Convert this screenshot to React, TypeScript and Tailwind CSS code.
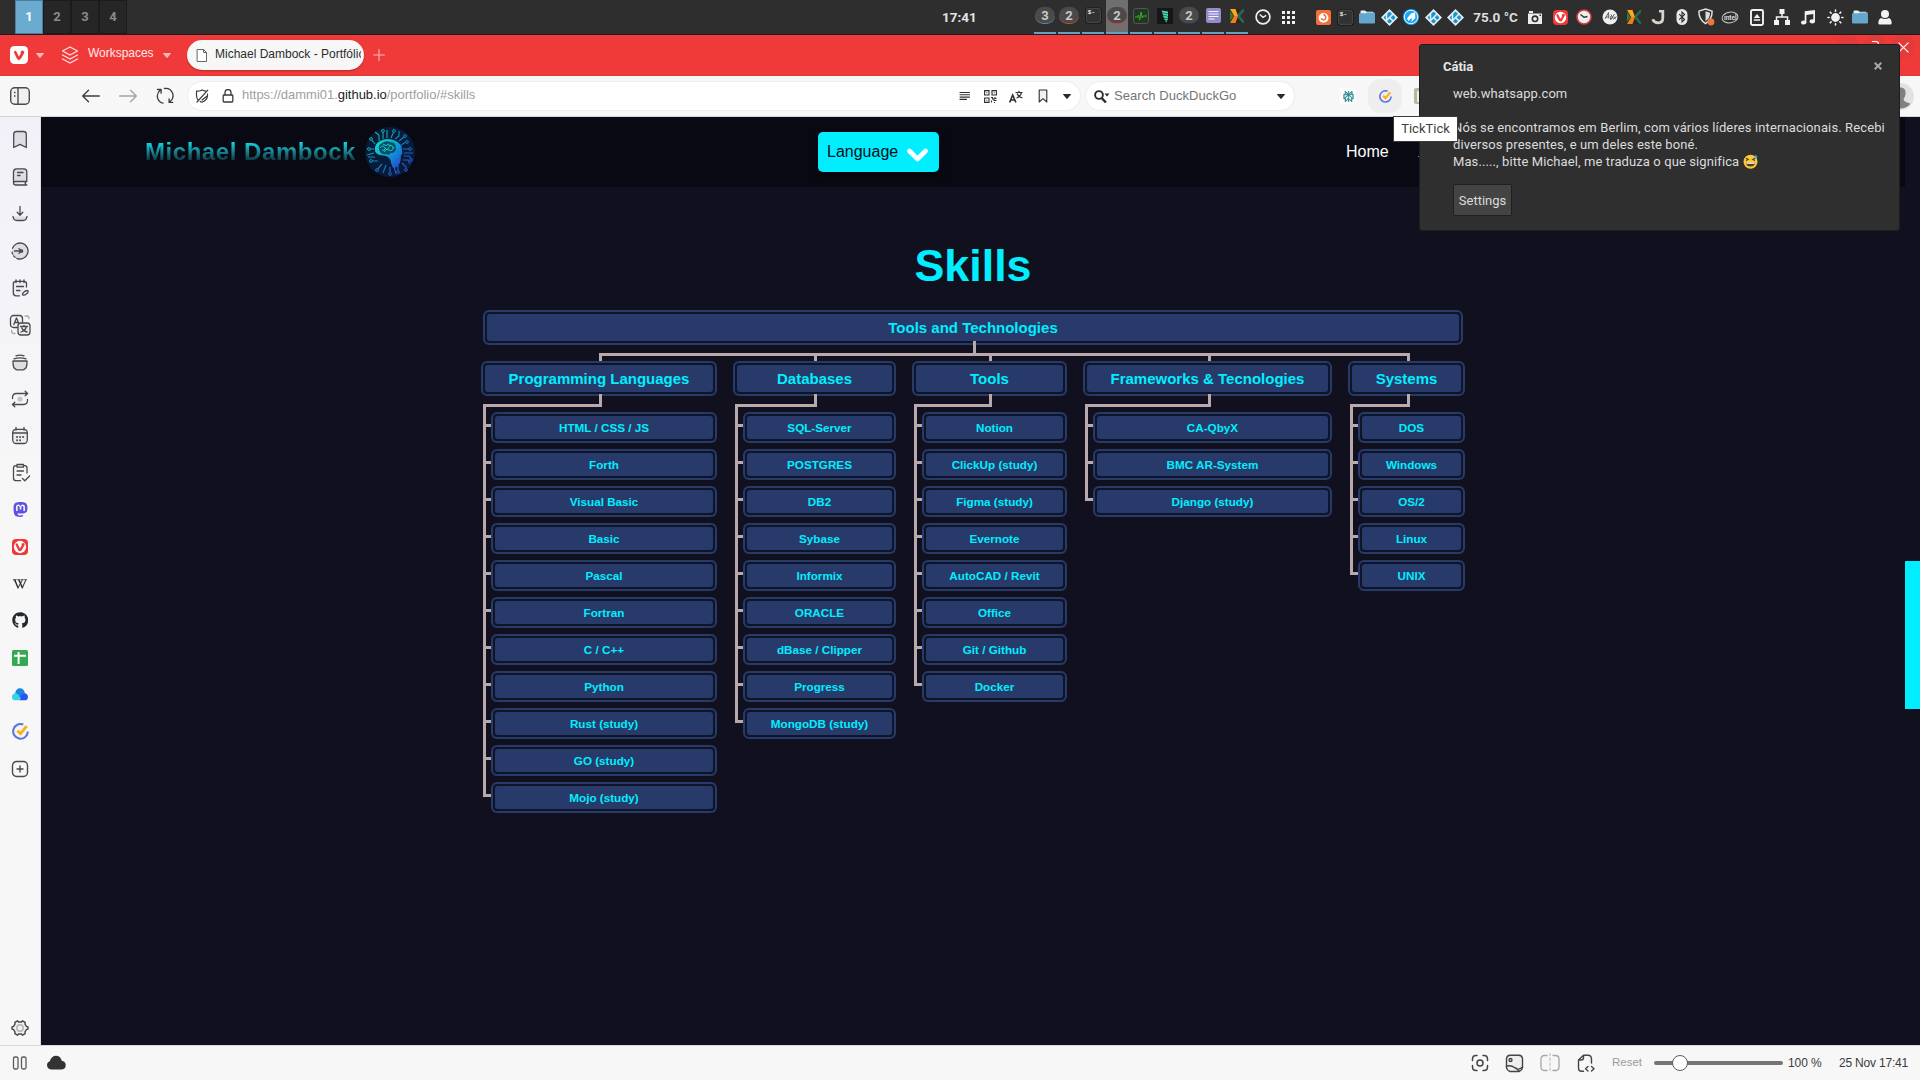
import type { ReactNode } from "react";
import { FaGithub, FaWikipediaW, FaMastodon } from "react-icons/fa";
import { SiKodi, SiPerplexity } from "react-icons/si";

const chromeFont = "font-['Liberation_Sans',sans-serif]";
const systemFont = "font-['Roboto',sans-serif]";

type IcProps = {
  size?: number;
  box?: number;
  color?: string;
  sw?: number;
  fill?: string;
  className?: string;
  children: ReactNode;
};

function Ic({ size = 20, box = 20, color = "#4a4a4c", sw = 1.3, fill = "none", className = "", children }: IcProps) {
  return (
    <svg
      width={size}
      height={size}
      viewBox={`0 0 ${box} ${box}`}
      fill={fill}
      stroke={color}
      strokeWidth={sw}
      strokeLinecap="round"
      strokeLinejoin="round"
      className={`shrink-0 ${className}`}
    >
      {children}
    </svg>
  );
}

function Caret({ className = "text-[#2b2b2b]" }: { className?: string }) {
  return (
    <svg width="8" height="5" viewBox="0 0 8 5" className={`shrink-0 ${className}`}>
      <path d="M.3 0h7.4q.4.3.1.8L4.6 4.6q-.6.6-1.2 0L.2.8Q-.1.3.3 0z" fill="currentColor" />
    </svg>
  );
}

function Vivaldi({ size, bg, inner, mark }: { size: number; bg: string; inner: string; mark: string }) {
  return (
    <svg width={size} height={size} viewBox="0 0 18 18" className="shrink-0">
      <rect width="18" height="18" rx="4.5" fill={bg} />
      <circle cx="9" cy="9" r="6.9" fill={inner} />
      <path d="M5.300 6.200 8.100 12q.8 1.200 1.700 0L12.600 7" fill="none" stroke={mark} strokeWidth="2.600" strokeLinecap="round" />
      <circle cx="12.400" cy="6.200" r="1.700" fill={mark} />
    </svg>
  );
}

function TickTickIcon({ size }: { size: number }) {
  return (
    <svg width={size} height={size} viewBox="0 0 16 16" fill="none" className="shrink-0">
      <path d="M10.6 1.5A6.9 6.9 0 1 0 14.9 8" stroke="#5b78e0" strokeWidth="2" />
      <path d="m5 7.2 3 2.8 5.8-7" stroke="#fbb114" strokeWidth="2.6" />
    </svg>
  );
}

/* ---------- system panel ---------- */

function Terminal() {
  return (
    <svg width="17" height="17" viewBox="0 0 17 17" className="shrink-0">
      <rect x=".5" y=".5" width="16" height="16" rx="2.5" fill="#0f0f0f" />
      <rect x="1.6" y="1.4" width="13.8" height="14" rx="1.5" fill="#303233" stroke="#555" strokeWidth=".8" />
      <text x="2.800" y="7" fontSize="6" fontWeight="700" fill="#eee" fontFamily="Liberation Mono, monospace">$-</text>
    </svg>
  );
}

function Folder() {
  return (
    <svg width="16" height="14" viewBox="0 0 16 14">
      <path d="M1.5 4V1.4q0-.9.9-.9H6l1.5 1.2h6.2q.8 0 .8.8V4z" fill="#e8eef2" />
      <path d="M0 4.2q0-1 1-1h6L8.3 2.6H15q1 0 1 1v8.9q0 1-1 1H1q-1 0-1-1z" fill="#64a7cd" />
    </svg>
  );
}

function Kodi() {
  return (
    <svg width="17" height="17" viewBox="0 0 17 17" className="shrink-0">
      <path d="M8.5 0 17 8.5 8.5 17 0 8.5z" fill="#e6edf0" />
      <g transform="translate(2.5 2.5)">
        <SiKodi size={12} color="#1496cf" />
      </g>
    </svg>
  );
}

function KFour() {
  return (
    <svg width="14" height="14" viewBox="0 0 14 14" className="shrink-0">
      <rect width="14" height="14" fill="#3a211b" />
      <path d="M0 0h5.500L8 7H4.200z" fill="#f7a81c" />
      <path d="M4.200 7H8l-2.500 7H0z" fill="#ef7f1b" />
      <path d="M0 2v10l3.700-5z" fill="#2f7d32" />
      <path d="M14 0 8.500 5.800v2.400L14 14z" fill="#4a2420" />
      <path d="M14 0h-1.500L8 5v4l4.500 5H14v-2L10 7l4-4.500z" fill="#14705c" />
    </svg>
  );
}

function Badge({ n, tone }: { n: string; tone: string }) {
  return (
    <div className={`flex h-[17px] w-5 items-center justify-center rounded-[9px] border-b bg-[#4a4a4a] ${tone} text-[13px] leading-none font-bold text-[#c9c9c9]`}>
      {n}
    </div>
  );
}

function Monitor() {
  return (
    <svg width="16" height="16" viewBox="0 0 16 16">
      <rect x=".5" y=".5" width="15" height="15" rx="2" fill="#263626" stroke="#4d5a4c" />
      <path d="M2 9h2.5l1-2 1.2 5L8 4l1.3 6 1-2H14" fill="none" stroke="#35b322" strokeWidth="1" />
    </svg>
  );
}

function Feather() {
  return (
    <svg width="16" height="16" viewBox="0 0 16 16">
      <rect width="16" height="16" fill="#151617" />
      <path d="m4.600 2.500 6.400 1v1.900L5.200 4.400zM5.400 5l5.600 1v1.900L6 7zM6 7.600l5 .9v1.900L6.600 9.600zM7 10.200l3.900.7-.5 1.600-2.800-.5zM8 12.500l2.200.4-1 1.600z" fill="#49d6b0" />
    </svg>
  );
}

function Note() {
  return (
    <svg width="15" height="15" viewBox="0 0 15 15">
      <rect width="15" height="15" rx="2" fill="#928ccb" />
      <path d="M2.5 3.5h10M2.5 6h10M2.5 8.500h10M2.5 11h6" stroke="#f4f2ff" strokeWidth="1.2" />
    </svg>
  );
}

const tasks: { icon: ReactNode; active?: boolean }[] = [
  { icon: <Badge n="3" tone="border-[#4c8cae]" /> },
  { icon: <Badge n="2" tone="border-[#b5532f]" /> },
  { icon: <Terminal /> },
  { icon: <Badge n="2" tone="border-[#e23a3a]" />, active: true },
  { icon: <Monitor /> },
  { icon: <Feather /> },
  { icon: <Badge n="2" tone="border-[#223a68]" /> },
  { icon: <Note /> },
  { icon: <KFour /> },
];

const tray: { w: string; icon: ReactNode }[] = [
  {
    w: "w-[22px]",
    icon: (
      <svg width="15" height="15" viewBox="0 0 15 15">
        <rect width="15" height="15" rx="2" fill="#f3703a" />
        <circle cx="7.500" cy="7.900" r="4.900" fill="#fff" />
        <path d="M7.300 4.500q2.600.7 2.500 3.300-.2 2-2.300 2.100Q5.600 9.700 5.400 8" fill="none" stroke="#f3703a" strokeWidth="1.500" />
      </svg>
    ),
  },
  { w: "w-[22px]", icon: <Terminal /> },
  { w: "w-[22px]", icon: <Folder /> },
  { w: "w-[22px]", icon: <Kodi /> },
  {
    w: "w-[22px]",
    icon: (
      <svg width="16" height="16" viewBox="0 0 16 16">
        <circle cx="8" cy="8" r="8" fill="#1aa5f5" />
        <circle cx="8" cy="8" r="6.700" fill="none" stroke="#fff" strokeWidth=".9" />
        <path d="M4 9.500 8 4.500l4-1.200.3 5.700L8.500 13l.3-4.500L5.500 12z" fill="#fff" />
      </svg>
    ),
  },
  { w: "w-[22px]", icon: <Kodi /> },
  { w: "w-[22px]", icon: <Kodi /> },
  { w: "w-[59px]", icon: <span className="text-[13.5px] font-bold whitespace-nowrap text-[#dedede]">75.0 °C</span> },
  {
    w: "w-5",
    icon: (
      <svg width="14" height="14" viewBox="0 0 14 14" fill="#ececec">
        <path d="M1 1h4v2H1z" />
        <path fillRule="evenodd" d="M0 3.600h14V14H0zM7 5.300a3.500 3.500 0 1 0 0 7 3.500 3.500 0 0 0 0-7zM11.500 4.600v1.300h1.500V4.600z" />
        <circle cx="7" cy="8.800" r="1.900" />
      </svg>
    ),
  },
  { w: "w-[30px]", icon: <Vivaldi size={15} bg="#ef3939" inner="#fff" mark="#ef3939" /> },
  {
    w: "w-[17px]",
    icon: (
      <svg width="16" height="16" viewBox="0 0 16 16" className="shrink-0">
        <circle cx="8" cy="8" r="7" fill="#eee" stroke="#c9403c" strokeWidth="1.600" />
        <path d="M4.500 5.500 8 8.300l3.500-.8" fill="none" stroke="#333" strokeWidth="1.400" />
      </svg>
    ),
  },
  {
    w: "ml-[6px] w-6",
    icon: (
      <svg width="16" height="16" viewBox="0 0 16 16">
        <circle cx="8" cy="8" r="7.500" fill="#f0f0f0" />
        <path d="m3 10 3.500-6.500.3 6M9 5.500l2.500 5M12.500 5l-4 6 .3-4M3.800 8h3M12 7.500l.8 2.500 1.500-2.500" fill="none" stroke="#555" strokeWidth=".9" />
      </svg>
    ),
  },
  { w: "w-6", icon: <KFour /> },
  {
    w: "w-6",
    icon: (
      <svg width="14" height="15" viewBox="0 0 14 15" fill="none">
        <path d="M8 1.200h3.800V8q0 4.800-4.600 4.800-4.200 0-5.500-3.500" stroke="#d8d2ca" strokeWidth="2.800" />
      </svg>
    ),
  },
  {
    w: "w-6",
    icon: (
      <svg width="12" height="16" viewBox="0 0 12 16">
        <rect x=".5" width="11" height="16" rx="5.500" fill="#e8e8e8" />
        <path d="m3.200 5.200 5.400 5.300L6 13V3l2.600 2.400-5.400 5.300" fill="none" stroke="#2e2e2e" strokeWidth="1.100" />
      </svg>
    ),
  },
  {
    w: "w-6",
    icon: (
      <svg width="17" height="18" viewBox="0 0 17 18">
        <path d="M7.500 1 14 3q.6 8-6.500 12.500Q.4 11 1 3z" fill="#2e2e2e" stroke="#dcdcdc" strokeWidth="1.500" />
        <path d="M7.500 3.300 12 4.700q.2 5.500-4.500 8.500z" fill="#dcdcdc" />
        <circle cx="13" cy="14" r="3.400" fill="#ef7440" />
      </svg>
    ),
  },
  {
    w: "w-6",
    icon: (
      <svg width="18" height="13" viewBox="0 0 18 13">
        <ellipse cx="9" cy="6.500" rx="8" ry="5.300" transform="rotate(-8 9 6.500)" fill="none" stroke="#c9c9c9" strokeWidth="1" />
        <text x="3" y="8.800" fontSize="6.500" fontWeight="700" fill="#d8d8d8" fontFamily="Roboto, sans-serif">intel</text>
      </svg>
    ),
  },
  {
    w: "w-[30px]",
    icon: (
      <svg width="14" height="17" viewBox="0 0 14 17">
        <rect x="1" y="1" width="12" height="15" rx="1.500" fill="none" stroke="#f2f2f2" strokeWidth="1.900" />
        <path d="M7 5 10.200 9H3.800zM3.800 10.300h6.400v1.400H3.800z" fill="#f2f2f2" />
      </svg>
    ),
  },
  {
    w: "w-5",
    icon: (
      <svg width="16" height="16" viewBox="0 0 16 16" fill="#f2f2f2">
        <path d="M5.500 0h5v5h-5zM0 11h5v5H0zM11 11h5v5h-5z" />
        <path d="M8 4v4M2.500 11V8h11v3" fill="none" stroke="#f2f2f2" strokeWidth="1.500" />
      </svg>
    ),
  },
  {
    w: "w-8",
    icon: (
      <svg width="14" height="15" viewBox="0 0 14 15" fill="#f2f2f2">
        <path d="M3.700 1.200 14 0v11.500h-1.700V4L5.400 4.900V12.500H3.700z" />
        <ellipse cx="2.700" cy="12.500" rx="2.700" ry="2.100" />
        <ellipse cx="11.300" cy="11.300" rx="2.700" ry="2.100" />
      </svg>
    ),
  },
  {
    w: "w-[22px]",
    icon: (
      <Ic size={17} box={17} color="#f2f2f2" sw={1.6}>
        <circle cx="8.500" cy="8.500" r="3.600" fill="#f2f2f2" />
        <path d="M8.500 1v1.200M8.500 14.800V16M1 8.500h1.200M14.800 8.500H16M3.200 3.200l.9.9M12.900 12.900l.9.900M3.200 13.800l.9-.9M12.900 4.100l.9-.9" />
      </Ic>
    ),
  },
  { w: "w-7", icon: <Folder /> },
  {
    w: "w-[22px]",
    icon: (
      <svg width="14" height="15" viewBox="0 0 14 15" fill="#f2f2f2">
        <circle cx="7" cy="4" r="4" />
        <path d="M3 8q4 2 8 0 2.500 1 2.700 5 0 1.500-1.500 1.500H1.800Q.3 14.500.3 13 .500 9 3 8z" />
      </svg>
    ),
  },
];

function SystemPanel() {
  return (
    <div className={`flex h-[35px] border-b border-[#1c1c1c] bg-[#2e2e2e] ${systemFont}`}>
      <div className="flex w-[942px] pl-[15px]">
        {["1", "2", "3", "4"].map((n) => (
          <div
            key={n}
            className={
              n === "1"
                ? "flex h-[34px] w-7 items-center justify-center border border-[#4c7f9f] bg-[#6cabd0] text-[13px] font-bold text-white"
                : "flex h-[34px] w-7 items-center justify-center border border-[#1b1b1b] bg-[#262626] text-[13px] font-bold text-[#8b8b8b]"
            }
          >
            {n}
          </div>
        ))}
      </div>
      <div className="flex w-[92px] items-center text-[13.5px] font-bold text-[#e4e4e4]">17:41</div>
      <div className="flex w-[216px]">
        {tasks.map((t, i) => (
          <div key={i} className="flex h-[34px] w-6">
            <div className={`flex h-full w-[22px] flex-col items-center border-b-2 border-[#62a1c7] ${t.active ? "bg-[#6f6f6f]" : ""}`}>
              <div className="flex h-[31px] items-center">{t.icon}</div>
            </div>
          </div>
        ))}
      </div>
      <div className="flex w-[62px] items-center pl-[5px]">
        <svg width="16" height="16" viewBox="0 0 16 16" fill="none" stroke="#eee" className="shrink-0">
          <circle cx="8" cy="8" r="6.900" strokeWidth="1.700" />
          <path d="m4.800 5.500 3.200 2.800 3.200-2" strokeWidth="1.500" />
        </svg>
        <div className="ml-[11px] grid w-[13px] grid-cols-3 gap-[2px]">
          {Array.from({ length: 9 }, (_, i) => (
            <i key={i} className="h-[3px] w-[3px] bg-[#efefef]" />
          ))}
        </div>
      </div>
      <div className="flex items-center">
        {tray.map((t, i) => (
          <div key={i} className={`flex shrink-0 items-center justify-center ${t.w}`}>
            {t.icon}
          </div>
        ))}
      </div>
    </div>
  );
}

/* ---------- browser chrome ---------- */

function TabBar() {
  return (
    <div className={`flex h-[41px] items-center border-b border-[#dd3a3a] bg-[#f03a3a] pl-[10px] ${chromeFont}`}>
      <Vivaldi size={18} bg="#ffffff" inner="#ffffff" mark="#ef3939" />
      <Caret className="ml-2 text-[#fbb9b9]" />
      <Ic size={18} box={18} color="#ffe3e3" sw={1.3} className="ml-[17px]">
        <path d="M9 1 16.500 5 9 9 1.500 5zM1.500 9 9 13l7.500-4M1.500 13 9 17l7.500-4" />
      </Ic>
      <span className="-mt-[5px] ml-[9px] w-[66px] text-[12px] tracking-[-0.02px] text-[#ffe8e8]">Workspaces</span>
      <Caret className="ml-[9px] text-[#fbb9b9]" />
      <div className="ml-4 flex h-[30px] w-[177px] items-center rounded-[15px] bg-[#f7f7f7] pr-[3px] pl-[9px] shadow-[0_1px_2px_rgba(0,0,0,0.25)]">
        <Ic size={13} box={13} color="#666666" sw={1}>
          <path d="M1.500.5h6l3 3v9h-9zM7.500.5v3h3" fill="#ffffff" />
        </Ic>
        <span className="-mt-[3px] ml-[6px] w-[146px] overflow-hidden text-[12px] leading-[18px] whitespace-nowrap text-[#2c2c2c]">Michael Dambock - Portfólio</span>
      </div>
      <Ic size={12} box={12} color="#fbb9b9" sw={1.1} className="ml-[9px]">
        <path d="M6 .6v10.800M.6 6h10.800" />
      </Ic>
      <div className="mt-[-16px] mr-[5px] ml-auto flex gap-[4px]">
        <div className="size-6 rounded-full bg-[#e53a3a]" />
        <div className="flex size-6 justify-center rounded-full bg-[#e53a3a] pt-[6px]">
          <div className="size-[7px] rounded-tr-[3px] border-t border-r border-white" />
        </div>
        <div className="flex size-6 items-center justify-center rounded-full bg-[#e53a3a]">
          <Ic size={11} box={11} color="#ffffff" sw={1.1}>
            <path d="m.8.8 9.400 9.400M10.200.8.8 10.200" />
          </Ic>
        </div>
      </div>
    </div>
  );
}

function Toolbar() {
  return (
    <div className={`flex h-[41px] items-center border-b border-[#d4d4d4] bg-[#f7f7f7] pl-[10px] ${chromeFont}`}>
      <svg width="20" height="18" viewBox="0 0 20 18" fill="none" stroke="#4a4a4a" strokeWidth="1.400">
        <rect x=".700" y=".700" width="18.600" height="16.600" rx="4" fill="#f0f0f0" />
        <path d="M8 1v16" />
        <path d="M4 5.500h1.500M4 9h1.500" />
      </svg>
      <Ic size={18} box={18} color="#3c3c3c" sw={1.3} className="ml-[52px]">
        <path d="M17.400 9H.800M6.500 3.200.700 9l5.800 5.800" />
      </Ic>
      <Ic size={18} box={18} color="#a2a2a2" sw={1.3} className="ml-[19px]">
        <path d="M.600 9h16.600M11.500 3.200 17.300 9l-5.800 5.800" />
      </Ic>
      <Ic size={18} box={18} color="#3c3c3c" sw={1.3} className="ml-[19px]">
        <path d="M4.200 3.300A7.300 7.300 0 0 0 7 16.200M8.500 1.500a7.300 7.300 0 0 1 5.600 13M1.500 2.500h3.600v3.700M16.700 15.400h-3.600v-3.600" />
      </Ic>
      <div className="ml-[14px] flex h-[28px] w-[892px] items-center rounded-[14px] bg-white pl-[7px] shadow-[0_0_2px_rgba(0,0,0,0.12)]">
        <Ic size={14} box={14} color="#3c3c3c" sw={1.2}>
          <path d="M10.500 1.800Q8 2 7 .9 5 2.300 1.500 2.200v4.300q0 2.500 1.500 4.300M12.500 5v1.500q0 4.500-5.500 6.800-1-.4-1.700-.9M12.800 1.200 2 13M11.500 7.500 7 11" />
        </Ic>
        <Ic size={14} box={14} color="#3c3c3c" sw={1.3} className="ml-[12px]">
          <rect x="2.200" y="6" width="9.600" height="7" rx=".8" />
          <path d="M4 6V3.600a3 3 0 0 1 6 0V6" />
        </Ic>
        <span className="-mt-[2px] ml-[7px] w-[716px] text-[13px] tracking-[-0.02px] whitespace-nowrap text-[#a0a0a0]">
          https://dammi01.<span className="text-[#1c1c1c]">github.io</span>/portfolio/#skills
        </span>
        <Ic size={12} box={12} color="#2f2f2f" sw={1.1} className="ml-px">
          <path d="M1 2.500h9.500M1 4.800h9.500M1 7.100h9.500M1 9.400h6.500" />
        </Ic>
        <svg width="13" height="13" viewBox="0 0 13 13" fill="none" stroke="#2f2f2f" strokeWidth="1.100" className="ml-[13px] shrink-0">
          <path d="M.600.600h4.400v4.400H.600zM8 .600h4.400v4.400H8zM.600 8h4.400v4.400H.600z" />
          <path d="M2.300 2.800h1M9.700 2.800h1M2.300 10.200h1M7 7.500h1.500v1.500H10v1.500h2.500M11 7v1.500h1.500M7.500 10.500v2M10 12.500h1" />
        </svg>
        <svg width="14" height="13" viewBox="0 0 14 13" fill="none" stroke="#2f2f2f" className="ml-[12px] shrink-0">
          <path d="M.700 12.500 3.700 5l3.200 7.500M1.800 10h4" strokeWidth="1.600" />
          <path d="M6.500 2.500h7M10 .8v1.500M12.500 2.500Q11.500 6.500 7.500 8M8 3.500q1.500 3.500 5.500 4.500" strokeWidth="1.100" />
        </svg>
        <Ic size={14} box={14} color="#2f2f2f" sw={1.1} className="ml-[13px]">
          <path d="M3.200 1h7.600v12L7 9.700 3.200 13z" fill="#f2f2f2" />
        </Ic>
        <Caret className="ml-[13px] text-[#2b2b2b]" />
      </div>
      <div className="ml-[6px] flex h-[28px] w-[208px] items-center rounded-[14px] bg-white pl-[8px] shadow-[0_0_2px_rgba(0,0,0,0.12)]">
        <svg width="16" height="13" viewBox="0 0 16 13" fill="none" stroke="#2b2b2b" className="shrink-0">
          <circle cx="5" cy="5" r="3.900" strokeWidth="1.900" />
          <path d="m7.700 8 4.200 4.500" strokeWidth="2.400" />
          <path d="M10.500 3.500h5l-2.500 3z" fill="#2b2b2b" stroke="none" />
        </svg>
        <span className="ml-[4px] w-[159px] text-[13px] tracking-[0.06px] text-[#757575]">Search DuckDuckGo</span>
        <Caret className="ml-[4px] text-[#2b2b2b]" />
      </div>
      <div className="ml-[46px] flex size-4 items-center justify-center bg-[#fcfcf9]">
        <SiPerplexity size={11} color="#21808d" stroke="#21808d" strokeWidth={1} />
      </div>
      <div className="ml-[12px] flex size-[34px] items-center justify-center rounded-[13px] bg-[#eeeeee]">
        <TickTickIcon size={13} />
      </div>
      <div className="ml-[12px] flex size-4 items-center justify-center rounded-[2px] bg-[#b9b4a4]">
        <div className="h-[11px] w-[10px] bg-[#f1efe8]" />
      </div>
      <svg width="27" height="27" viewBox="0 0 27 27" className="mr-[6px] ml-auto shrink-0">
        <circle cx="13.500" cy="13.500" r="13.500" fill="#e2e2e2" />
        <path d="M13.500 4.500c4.500 0 5.500 3.500 5 7q-.5 3-2 4.500.2 2.200 2.500 3l4.500 1.800a13 13 0 0 1-20 0L8 19q2.300-.8 2.500-3-1.500-1.500-2-4.500c-.5-3.500.5-7 5-7z" fill="#808080" />
      </svg>
    </div>
  );
}

const sidebarIcons: ReactNode[] = [
  <Ic>
    <path d="M3.700 4.200Q3.700 1.500 6.500 1.500h7q2.800 0 2.800 2.700v13.300L10 14.300l-6.300 3.200z" fill="#dddde3" />
  </Ic>,
  <Ic>
    <path d="M3.500 15.500V5Q3.500 1.800 6.500 1.800h7.500Q16.800 1.800 16.800 5v9.500H5.500Q3.500 14.500 3.500 16.200T5.500 18h11.300M16 14.500q-1.500 1.700 0 3.500" fill="#dddde3" />
    <path d="M7.500 5.500h5.500M7.500 8.500h2.500" />
  </Ic>,
  <Ic>
    <path d="M10 2.500v8.500M7.200 8.300 10 11.200l2.800-2.900" />
    <path d="M3 12.500q.5 4 4 4h6q3.500 0 4-4" fill="#dddde3" />
  </Ic>,
  <Ic>
    <circle cx="10" cy="10" r="8" fill="#dddde3" strokeDasharray="38 2 2 2 2 10" transform="rotate(-160 10 10)" />
    <path d="M4.500 10H11M9 7.700l2.500 2.300L9 12.300" />
    <circle cx="11.500" cy="10" r="1.200" fill="#4a4a4c" />
  </Ic>,
  <Ic>
    <path d="M16.500 9V5.500Q16.500 3.300 14 3.300H6Q3.300 3.300 3.300 5.500v9.500q0 2.800 2.700 2.800h3.500" fill="#ececf1" />
    <path d="M6 1.800v2.700M10 1.800v2.700M14 1.800v2.700M6.500 8.500h7M6.500 12.500h3.500M12.500 16.800q0-1.500 1.200-2.500 2.500-2.500 4.300-1.500.8 1.500-2 3.500-1.500 1.200-3.500.5z" />
  </Ic>,
  <Ic size={22} box={22}>
    <rect x="1.500" y="1.500" width="12" height="12" rx="3" fill="#f2f2f5" />
    <path d="M4.800 10.500 7.500 4l2.800 6.500M5.800 8.500h3.500" />
    <rect x="9" y="9" width="12" height="12" rx="3" fill="#ececf1" />
    <path d="M11.500 12.500h7M15 11.300v1M17.500 12.500q-1 4-5.500 5.500M12.800 14q1.200 3 5.200 4" />
    <path d="M16 2h2q2 0 2 2.500M2.500 16.500q0 3 2.500 3h1" stroke="#aaa" />
  </Ic>,
  <Ic>
    <path d="M3 9h14q.5 8-4 8.800H7Q2.500 17 3 9z" fill="#dddde3" />
    <path d="M4 6.800q6-2 12 0M6 3.800q4-1.500 8 0" />
  </Ic>,
  <Ic>
    <circle cx="10" cy="10" r="2.600" fill="#c4c4c8" stroke="none" />
    <path d="M2.500 9.500q-.3-5 4-5H17.500M15.200 2.200l2.400 2.300-2.400 2.300M17.500 10.500q.3 5-4 5H2.500M4.800 13.200l-2.400 2.300 2.400 2.300" />
  </Ic>,
  <Ic>
    <rect x="2.700" y="3.300" width="14.600" height="14.200" rx="3.500" fill="#ececf1" />
    <path d="M6 1.500v2.500M14 1.500v2.500M3 7h14" />
    <path d="M7 11h.1M10 11h.1M13 11h.1M7 14.200h.1M10 14.200h.1" strokeWidth="1.900" />
  </Ic>,
  <Ic>
    <path d="M17 10V5q0-2.300-2.300-2.300H6Q3.500 2.700 3.500 5v10q0 2.700 2.500 2.700h4.500" />
    <path d="M7 1.500h6.500v2.700H7z" fill="#eee" />
    <path d="M7 8h6.500M7 12h4M12.500 15.500l2.300 2.200 5-5" />
  </Ic>,
  <FaMastodon size={17} color="#5f52e0" />,
  <Vivaldi size={16} bg="#ef3939" inner="#ffffff" mark="#ef3939" />,
  <FaWikipediaW size={14} color="#1c1c1c" stroke="#1c1c1c" strokeWidth={12} />,
  <FaGithub size={16.5} color="#24292f" />,
  <svg width="16" height="16" viewBox="0 0 16 16">
    <rect width="16" height="16" rx="1.500" fill="#34a853" />
    <path d="M2 5.800h12M6.600 2v12" stroke="#fff" strokeWidth="2" />
  </svg>,
  <svg width="16" height="13" viewBox="0 0 18 14">
    <circle cx="9" cy="5.300" r="5.300" fill="#1d85dc" />
    <path d="M0 9.700A4 4 0 0 1 4.200 5.700Q9 6.500 9 13.600H4A4 4 0 0 1 0 9.700z" fill="#33d3ea" />
    <path d="M18 9.700a4 4 0 0 0-4.200-4Q9 6.500 9 13.600h5a4 4 0 0 0 4-3.900z" fill="#2a53f5" />
  </svg>,
  <TickTickIcon size={17} />,
  <Ic size={18} box={18} sw={1.4}>
    <rect x="1.500" y="1.500" width="15" height="15" rx="4" />
    <path d="M9 6v6M6 9h6" />
  </Ic>,
];

function Sidebar() {
  return (
    <div className="flex w-[41px] shrink-0 flex-col items-center border-r border-[#dcdce2] bg-linear-to-b from-[#f2f1f9] via-[#f7f7f7] via-45% to-[#f7f7f7] pt-[4px]">
      {sidebarIcons.map((icon, i) => (
        <div key={i} className="flex h-[37px] shrink-0 items-center justify-center">
          {icon}
        </div>
      ))}
      <div className="mt-auto mb-[7px]">
        <Ic sw={1.4}>
          <path d="m7.500 2.800 1 1.200h3l1-1.200 2.700 1.500-.3 1.600 1.500 2.500 1.600.6v2l-1.600.6-1.500 2.500.3 1.600-2.700 1.500-1-1.200h-3l-1 1.200-2.700-1.500.3-1.600-1.500-2.500L2 11V9l1.600-.6 1.500-2.500-.3-1.600z" fill="#f0f0f0" />
          <circle cx="10" cy="10" r="3.200" stroke="#b0b0b0" />
        </Ic>
      </div>
    </div>
  );
}

/* ---------- portfolio page ---------- */

function BrainLogo() {
  return (
    <svg width="50" height="50" viewBox="0 0 50 50" className="ml-[9px] shrink-0">
      <defs>
        <linearGradient id="head" x1="0" y1="0" x2="1" y2="1">
          <stop offset="0" stopColor="#0fe3bd" />
          <stop offset=".5" stopColor="#0aa0d8" />
          <stop offset="1" stopColor="#2b3ad0" />
        </linearGradient>
        <linearGradient id="trace" gradientUnits="userSpaceOnUse" x1="5" y1="5" x2="45" y2="45">
          <stop offset="0" stopColor="#16b89f" />
          <stop offset=".5" stopColor="#1380b8" />
          <stop offset="1" stopColor="#3440c8" />
        </linearGradient>
      </defs>
      <circle cx="25" cy="25" r="25" fill="#061c3a" />
      <g fill="none" stroke="url(#trace)" strokeWidth="1.200">
        <path d="M10 17 6 12M14 14V8l-4-3M18 12V5M22 11V3M26 11l3-7M30 12l4-3V4M34 14l5-4M36 18l5-3M38 22h6M39 26h9M39 29h5l3 4M38 33h5l2 4M37 36l4 4v3M33 38v7M29 39l2 8M25 40v8M21 38l-3 8M17 37l-5 6M13 34H6M10 30H3M9 26 2 28M9 22H2" />
      </g>
      <g fill="#061c3a" stroke="url(#trace)" strokeWidth="1">
        <circle cx="6" cy="12" r="1.400" /><circle cx="18" cy="4" r="1.400" /><circle cx="29" cy="4" r="1.400" />
        <circle cx="40" cy="9" r="1.400" /><circle cx="42" cy="15" r="1.400" /><circle cx="45" cy="22" r="1.400" />
        <circle cx="46" cy="33" r="1.400" /><circle cx="41" cy="43" r="1.400" /><circle cx="33" cy="45" r="1.400" />
        <circle cx="25" cy="47" r="1.400" /><circle cx="12" cy="43" r="1.400" /><circle cx="6" cy="34" r="1.400" />
        <circle cx="4" cy="22" r="1.400" />
      </g>
      <path d="M10 24q-1-7 5-10 8-4 16 0 6 3 6 9 0 2 .500 4l-1.500 1q0 4-1 8l-3 4-4 1-2-5q0-5-5-7l-6-1q-4-1-5-4z" fill="url(#head)" />
      <path d="M14 22q-1-4 3-6 4-3 8-1 6 0 6 6 0 5-5 5-2 3-5 1-6 1-7-5z" fill="#0a4d6a" />
      <path d="M15 21q3-4 5 0t5-3M18 17q3 3 6 0M19 25q2-4 5-2t5-3M24 18q4 0 4 3M17 23q2 1 3-1" fill="none" stroke="#14d3c0" strokeWidth="1" />
    </svg>
  );
}

function SiteHeader() {
  return (
    <header className="mr-[15px] flex h-[70px] items-center bg-[#080912] pl-[104px]">
      <div className="w-[211px] bg-linear-to-b from-[#00f0ff] from-10% to-[#0a1f29] to-90% bg-clip-text text-[24px] leading-[30px] font-bold tracking-[0.55px] whitespace-nowrap text-transparent">
        Michael Dambock
      </div>
      <BrainLogo />
      <div className="ml-[403px] flex h-[40px] w-[121px] items-center rounded-[5px] bg-[#00eeff] pl-[9px] shadow-[0_4px_6px_rgba(0,0,0,0.4)]">
        <span className="w-[80px] pb-px text-[16px] text-[#0b0c14]">Language</span>
        <svg width="21" height="14" viewBox="0 0 21 14" className="mt-[5px]" fill="none">
          <path d="m2.500 3 8 8 8-8" stroke="#fff" strokeWidth="4.600" strokeLinecap="round" strokeLinejoin="round" />
        </svg>
      </div>
      <span className="ml-[407px] w-[43px] text-[16px] text-white">Home</span>
      <i className="mt-[9px] ml-[29px] h-px w-px bg-[#8a8a8a]" />
    </header>
  );
}

function Node({ label, size = "item" }: { label: string; size?: "head" | "item" }) {
  return (
    <div
      className={
        size === "head"
          ? "h-[35px] rounded-[6px] border-2 border-[#283a69] bg-[#0e1529] p-[2px]"
          : "h-[31px] flex-1 rounded-[6px] border-2 border-[#283a69] bg-[#0e1529] p-[2px]"
      }
    >
      <div
        className={
          size === "head"
            ? "flex h-full items-center justify-center rounded-[3px] bg-[#283a69] text-[15px] leading-none font-bold whitespace-nowrap text-[#00eeff]"
            : "flex h-full items-center justify-center rounded-[3px] bg-[#283a69] pt-px text-[11.7px] leading-none font-bold whitespace-nowrap text-[#00eeff]"
        }
      >
        {label}
      </div>
    </div>
  );
}

const columns = [
  {
    title: "Programming Languages",
    width: "w-[236px]",
    drop: "ml-[118px]",
    elbow: "w-[119px]",
    items: ["HTML / CSS / JS", "Forth", "Visual Basic", "Basic", "Pascal", "Fortran", "C / C++", "Python", "Rust (study)", "GO (study)", "Mojo (study)"],
  },
  {
    title: "Databases",
    width: "w-[163px]",
    drop: "ml-[81px]",
    elbow: "w-[82px]",
    items: ["SQL-Server", "POSTGRES", "DB2", "Sybase", "Informix", "ORACLE", "dBase / Clipper", "Progress", "MongoDB (study)"],
  },
  {
    title: "Tools",
    width: "w-[155px]",
    drop: "ml-[77px]",
    elbow: "w-[78px]",
    items: ["Notion", "ClickUp (study)", "Figma (study)", "Evernote", "AutoCAD / Revit", "Office", "Git / Github", "Docker"],
  },
  {
    title: "Frameworks & Tecnologies",
    width: "w-[249px]",
    drop: "ml-[125px]",
    elbow: "w-[126px]",
    items: ["CA-QbyX", "BMC AR-System", "Django (study)"],
  },
  {
    title: "Systems",
    width: "w-[117px]",
    drop: "ml-[59px]",
    elbow: "w-[60px]",
    items: ["DOS", "Windows", "OS/2", "Linux", "UNIX"],
  },
];

function SkillTree() {
  return (
    <section className="ml-[440px] w-[984px] pt-[54px]">
      <h1 className="h-[69px] text-center text-[44.8px] leading-[48px] font-bold text-[#00eeff]">Skills</h1>
      <div className="ml-[2px] w-[980px]">
        <Node label="Tools and Technologies" size="head" />
      </div>
      <div className="relative -mt-[4px] ml-[492px] h-[12px] w-[3px] bg-[#b9a8ac]" />
      <div className="ml-[118px] h-[3px] w-[811px] bg-[#b9a8ac]" />
      <div className="flex items-start gap-4">
        {columns.map((c) => (
          <div key={c.title} className={c.width}>
            <div className={`h-[5px] w-[3px] bg-[#b9a8ac] ${c.drop}`} />
            <Node label={c.title} size="head" />
            <div className={`relative -mt-[2px] ml-[2px] h-[13px] border-r-3 border-b-3 border-[#b9a8ac] ${c.elbow}`} />
            {c.items.map((label, i) => (
              <div key={label} className="ml-[2px] flex h-[37px]">
                <div className={`w-[3px] bg-[#b9a8ac] ${i === c.items.length - 1 ? "h-5" : "h-full"}`} />
                <div className="mt-[17px] h-[3px] w-[5px] bg-[#b9a8ac]" />
                <div className="flex flex-1 pt-[5px]">
                  <Node label={label} />
                </div>
              </div>
            ))}
          </div>
        ))}
      </div>
    </section>
  );
}

function StatusBar() {
  return (
    <div className={`flex h-[35px] items-center border-t border-[#d9d9d9] bg-[#f7f7f7] pl-[12px] text-[12px] text-[#3a3a3a] ${chromeFont}`}>
      <Ic size={16} box={16} color="#5a5a5a" sw={1.3}>
        <rect x="1.500" y="2" width="4.500" height="12" rx="1.500" />
        <rect x="9.500" y="2" width="4.500" height="12" rx="1.500" />
      </Ic>
      <svg width="20" height="15" viewBox="0 0 20 15" className="-mt-px ml-[18px]">
        <path d="M5 14.500a4.300 4.300 0 0 1-1.200-8.300Q5.500.700 10 .700t5.700 5q4 .800 4 4.500t-4 4.300z" fill="#333" />
      </svg>
      <Ic size={18} box={18} color="#444444" sw={1.5} className="ml-[1405px]">
        <path d="M1.500 6.500V5Q1.500 1.500 5 1.500h1M12 1.500h1q3.500 0 3.500 3.500v1.500M16.500 11.500V13q0 3.500-3.500 3.500h-1M6 16.500H5q-3.500 0-3.500-3.500v-1.500" />
        <circle cx="9" cy="9" r="3" />
      </Ic>
      <Ic size={19} box={19} color="#444444" sw={1.4} className="ml-[16px]">
        <path d="M1.500 4.500Q2 1.500 5 1.300h9q3 .2 3.500 3.200v9q-.5 3-3.500 4H5q-3-1-3.500-4z" fill="#efefef" />
        <circle cx="5.500" cy="6" r="1.500" />
        <path d="M1.500 12q5-1 8 1.500 4 3.500 8-.500M11 14l3 3" />
      </Ic>
      <Ic size={20} box={20} color="#a6a6a6" sw={1.3} className="ml-[16px]">
        <path d="M7 2.500H4.500Q1 2.500 1 6v8q0 3.500 3.500 3.500H7M13 2.500h2.500Q19 2.500 19 6v8q0 3.500-3.500 3.500H13" />
        <path d="M10 0v20" stroke="#c8c8c8" strokeDasharray="2.500 2.500" />
      </Ic>
      <Ic size={18} box={18} color="#444444" sw={1.4} className="ml-[17px]">
        <path d="M14.500 9V5Q14.500 1.200 11 1.200H6.500L1.500 6v8q0 3.200 3.200 3.200h1.800M6.500 1.500v2.500Q6.500 6 4 6H1.500" />
        <path d="m11 12.500-2.500 2.300 2.500 2.200M14.500 12.500l2.500 2.300-2.500 2.200" />
      </Ic>
      <span className="-mt-px ml-[17px] w-[42px] text-[11.5px] text-[#9b9b9b]">Reset</span>
      <div className="flex h-1 w-[129px] items-center rounded-full bg-[#757575]">
        <div className="ml-[18px] size-4 rounded-full border border-[#5c5c5c] bg-white" />
      </div>
      <span className="-mt-px ml-[5px] w-[51px] text-[12px] tracking-[-0.1px] whitespace-nowrap">100 %</span>
      <span className="-mt-px text-[12px] tracking-[-0.2px] whitespace-nowrap">25 Nov 17:41</span>
    </div>
  );
}

/* ---------- floating layers ---------- */

function SweatSmile() {
  return (
    <svg width="15" height="15" viewBox="0 0 15 15" className="inline-block align-[-3px]">
      <circle cx="7.500" cy="7.800" r="7" fill="#fcc934" />
      <path d="M3 8.200h9q0 4.300-4.500 4.300T3 8.200z" fill="#5b3a21" />
      <path d="M3.400 8.300h8.200v1.500H3.400z" fill="#fff" />
      <path d="m3 4.200 2.300 1.300L3 6.500M12 4.200 9.700 5.500l2.300 1" fill="none" stroke="#5b3a21" strokeWidth="1.100" />
      <path d="M12.800.500q2 2.800 1.300 3.900-1 1-2.200 0-.7-1.100.9-3.900z" fill="#4aa7ee" />
    </svg>
  );
}

function Notification() {
  return (
    <div className={`absolute top-[44px] left-[1419px] h-[187px] w-[481px] rounded-[3px] border border-[#1d1f1f] bg-[#2f2f2f] text-[13px] text-[#dcdcdc] ${systemFont}`}>
      <div className="flex items-center justify-between pt-[13px] pr-[17px] pl-[23px] leading-[17px]">
        <b className="font-bold text-[#e6e6e6]">Cátia</b>
        <svg width="8" height="8" viewBox="0 0 8 8" stroke="#a8a8a8" strokeWidth="2" className="-mt-px">
          <path d="m.7.700 6.600 6.600M7.300.700.700 7.300" />
        </svg>
      </div>
      <div className="pl-[33px] leading-[17px] whitespace-nowrap">
        <p className="mt-[10px] tracking-[0.08px]">web.whatsapp.com</p>
        <p className="mt-[17px] tracking-[0.115px]">Nós se encontramos em Berlim, com vários líderes internacionais. Recebi</p>
        <p className="tracking-[0.09px]">diversos presentes, e um deles este boné.</p>
        <p className="h-[17px] tracking-[0.1px]">
          Mas....., bitte Michael, me traduza o que significa <SweatSmile />
        </p>
        <div className="mt-[14px] flex h-8 w-[59px] items-center justify-center rounded-[2px] border border-[#1f1f1f] bg-[#444444]">Settings</div>
      </div>
    </div>
  );
}

export default function App() {
  return (
    <div className="relative flex h-[1080px] w-[1920px] flex-col overflow-hidden bg-[#f7f7f7] font-['Liberation_Sans',sans-serif]">
      <SystemPanel />
      <TabBar />
      <Toolbar />
      <div className="flex min-h-0 flex-1">
        <Sidebar />
        <main className="flex flex-1 overflow-hidden bg-[#11101e]">
          <div className="relative w-full flex-1">
            <SiteHeader />
            <SkillTree />
            <div className="absolute top-[444px] right-0 h-[148px] w-[15px] bg-[#00eeff]" />
          </div>
        </main>
      </div>
      <StatusBar />
      <Notification />
      <div className={`absolute top-[116px] left-[1393px] flex h-[26px] w-[65px] items-center justify-center border border-[#3a3a3a] bg-white text-[13px] text-[#3d3d3d] ${systemFont}`}>
        TickTick
      </div>
    </div>
  );
}
